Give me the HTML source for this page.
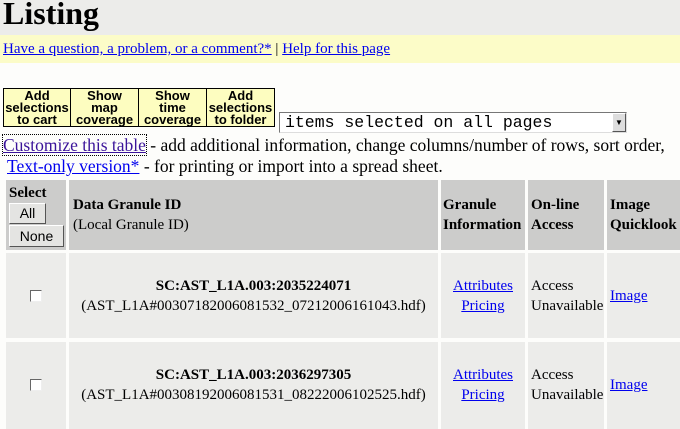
<!DOCTYPE html>
<html><head><style>
body{margin:0;background:#fdfdfb;font-family:"Liberation Serif",serif;width:680px;height:429px;overflow:hidden;position:relative;color:#000}
.a{position:absolute;white-space:nowrap}
a{color:#00e;text-decoration:underline}
.btn{position:absolute;top:88px;height:39px;background:#fdfdc0;border:1px solid #000;box-sizing:border-box;font:bold 13px/12px "Liberation Sans",sans-serif;text-align:center;padding-top:1px;overflow:hidden;white-space:nowrap}
.cell{position:absolute;box-sizing:border-box;font-size:15px;line-height:20px;white-space:nowrap}
.h{background:#cccccb;font-weight:bold}
.r{background:#ececea}
.b{background:#e4e4e2;border:1px solid;border-color:#fff #555 #555 #fff;font:14px "Liberation Sans",sans-serif;position:absolute;text-align:center;box-sizing:border-box}
.cb{position:absolute;width:12px;height:12px;background:#fff;border:1px solid;border-color:#666 #eee #eee #666;box-sizing:border-box}
</style></head><body>
<div class="a" style="left:0;top:0;width:680px;height:35px;background:#ececea"></div>
<div class="a" style="left:3px;top:-5px;font-size:32px;font-weight:bold">Listing</div>
<div class="a" style="left:0;top:35px;width:680px;height:28px;background:#fcfcc8"></div>
<div class="a" style="left:3px;top:41px;font-size:15px"><a>Have a question, a problem, or a comment?*</a> | <a>Help for this page</a></div>
<div class="btn" style="left:3px;width:68px">Add<br>selections<br>to cart</div>
<div class="btn" style="left:70px;width:69px">Show<br>map<br>coverage</div>
<div class="btn" style="left:138px;width:69px">Show<br>time<br>coverage</div>
<div class="btn" style="left:206px;width:69px">Add<br>selections<br>to folder</div>
<div class="a" style="left:279px;top:112px;width:348px;height:21px;background:#fff;border:1px solid;border-color:#777 #ddd #ddd #777;box-sizing:border-box;font:16.5px/18px 'Liberation Mono',monospace;padding:1px 0 0 5px">items selected on all pages</div>
<div class="a" style="left:612px;top:113px;width:14px;height:19px;background:#ddd;border:1px solid;border-color:#fff #555 #555 #fff;box-sizing:border-box;font-size:8px;text-align:center;line-height:17px">▼</div>
<div class="a" style="left:3px;top:135px;font-size:17.5px;line-height:21px"><a style="color:#3a1399;text-decoration:underline;outline:1px dotted #000">Customize this table</a> - add additional information, change columns/number of rows, sort order,</div>
<div class="a" style="left:7px;top:156px;font-size:17.5px;line-height:21px"><a>Text-only version*</a> - for printing or import into a spread sheet.</div>

<div class="cell h" style="left:6px;top:180px;width:60px;height:70px;padding:3px 3px">Select</div>
<div class="b" style="left:9px;top:203px;width:37px;height:21px;line-height:19px">All</div>
<div class="b" style="left:9px;top:225px;width:55px;height:22px;line-height:20px">None</div>
<div class="cell h" style="left:69px;top:180px;width:369px;height:70px;padding:15px 4px">Data Granule ID<br><span style="font-weight:normal">(Local Granule ID)</span></div>
<div class="cell h" style="left:441px;top:180px;width:84px;height:70px;padding:15px 2px">Granule<br>Information</div>
<div class="cell h" style="left:528px;top:180px;width:76px;height:70px;padding:15px 3px">On-line<br>Access</div>
<div class="cell h" style="left:607px;top:180px;width:73px;height:70px;padding:15px 3px">Image<br>Quicklook</div>

<div class="cell r" style="left:6px;top:253px;width:60px;height:85px"></div>
<div class="cb" style="left:30px;top:290px"></div>
<div class="cell r" style="left:69px;top:253px;width:369px;height:85px;padding-top:23px;text-align:center"><b>SC:AST_L1A.003:2035224071</b><br>(AST_L1A#00307182006081532_07212006161043.hdf)</div>
<div class="cell r" style="left:441px;top:253px;width:84px;height:85px;padding-top:23px;text-align:center"><a>Attributes</a><br><a>Pricing</a></div>
<div class="cell r" style="left:528px;top:253px;width:76px;height:85px;padding:23px 3px">Access<br>Unavailable</div>
<div class="cell r" style="left:607px;top:253px;width:73px;height:85px;padding:33px 3px"><a>Image</a></div>

<div class="cell r" style="left:6px;top:342px;width:60px;height:87px"></div>
<div class="cb" style="left:30px;top:379px"></div>
<div class="cell r" style="left:69px;top:342px;width:369px;height:87px;padding-top:23px;text-align:center"><b>SC:AST_L1A.003:2036297305</b><br>(AST_L1A#00308192006081531_08222006102525.hdf)</div>
<div class="cell r" style="left:441px;top:342px;width:84px;height:87px;padding-top:23px;text-align:center"><a>Attributes</a><br><a>Pricing</a></div>
<div class="cell r" style="left:528px;top:342px;width:76px;height:87px;padding:23px 3px">Access<br>Unavailable</div>
<div class="cell r" style="left:607px;top:342px;width:73px;height:87px;padding:33px 3px"><a>Image</a></div>
</body></html>
